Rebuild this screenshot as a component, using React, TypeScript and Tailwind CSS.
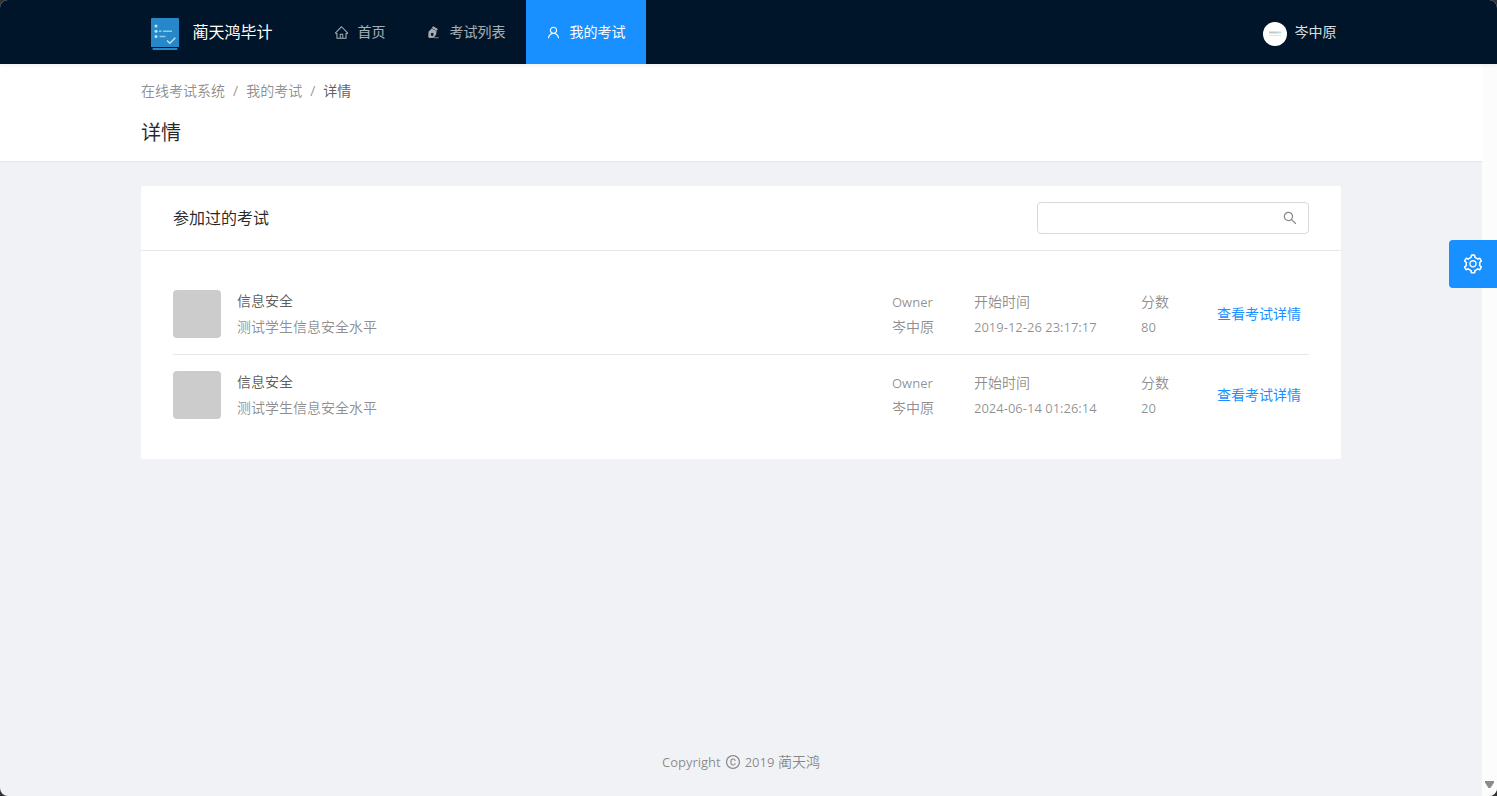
import React, { useState } from "react";
import {
  AiOutlineCopyright,
  AiOutlineHome,
  AiOutlineSearch,
  AiOutlineSetting,
  AiOutlineUser,
} from "react-icons/ai";

interface ExamRecord {
  id: number;
  title: string;
  desc: string;
  owner: string;
  startTime: string;
  score: number;
}

const records: ExamRecord[] = [
  {
    id: 1,
    title: "信息安全",
    desc: "测试学生信息安全水平",
    owner: "岑中原",
    startTime: "2019-12-26 23:17:17",
    score: 80,
  },
  {
    id: 2,
    title: "信息安全",
    desc: "测试学生信息安全水平",
    owner: "岑中原",
    startTime: "2024-06-14 01:26:14",
    score: 20,
  },
];

const Logo = () => (
  <svg className="mt-1" width="32" height="32" viewBox="0 0 32 32" aria-hidden="true">
    <path d="M3 0h26a1 1 0 0 1 1 1v28H2V1a1 1 0 0 1 1-1z" fill="#2688c8" />
    <path d="M3.5 30h25v1a1 1 0 0 1-1 1h-23a1 1 0 0 1-1-1z" fill="#2688c8" />
    <g fill="#b9e4fa">
      <circle cx="7" cy="8" r="1.5" />
      <circle cx="7" cy="13.2" r="1.5" />
      <circle cx="7" cy="18.5" r="1.5" />
    </g>
    <g fill="none" stroke="#8ecbee" strokeWidth="1.4">
      <path d="M10 13.2h2.5M14 13.2h9M10.5 18.5h6" />
      <path d="M18 22.5l2.8 2.8 5.5-5.5" stroke="#b9e4fa" />
    </g>
  </svg>
);

// pen nib over a short line
const ExamIcon = () => (
  <svg width="15" height="15" viewBox="0 0 16 16" aria-hidden="true">
    <path
      fill="currentColor"
      fillRule="evenodd"
      d="M7.6 1.2 12.6 4.2 11.6 6 6.2 3.2zM6 3.6 11.3 6.4 10.8 10 8.2 13.6 3.6 13.9 2.4 12.8 2.7 7.2zM6.6 8.200a1.500 1.700 0 1 0 0 3.400 1.500 1.700 0 0 0 0-3.400z"
    />
    <path d="M8.500 13.600h5" stroke="currentColor" strokeWidth="0.8" />
  </svg>
);

const navItems = [
  { label: "首页", icon: <AiOutlineHome size={15} />, active: false },
  { label: "考试列表", icon: <ExamIcon />, active: false },
  { label: "我的考试", icon: <AiOutlineUser size={15} />, active: true },
];

const Header = () => (
  <header className="relative z-10 h-16 bg-[#001529] shadow-[0_1px_4px_rgba(0,21,41,0.08)]">
    <div className="mx-auto flex h-full max-w-[1200px] items-center justify-between">
      <div className="flex h-full items-center">
        <a href="#" className="flex w-[165px] items-center gap-3 text-base text-white">
          <Logo />
          <h1>蔺天鸿毕计</h1>
        </a>
        <nav className="flex h-full">
          {navItems.map((item) => (
            <a
              key={item.label}
              href="#"
              className={
                item.active
                  ? "flex items-center gap-[9px] bg-[#1890ff] px-5 text-white"
                  : "flex items-center gap-[9px] px-5 text-white/65"
              }
            >
              {item.icon}
              <span>{item.label}</span>
            </a>
          ))}
        </nav>
      </div>
      <button type="button" className="flex h-full items-center gap-2 px-3 text-white/85">
        <svg className="mt-1" width="24" height="24" viewBox="0 0 24 24" aria-hidden="true">
          <circle cx="12" cy="12" r="12" fill="#fff" />
          <path d="M6 10.5h8" stroke="#c5c5cf" strokeWidth="2" />
          <path d="M14 10.5h4" stroke="#b5dfe3" strokeWidth="2" />
          <path d="M6 13.5h12" stroke="#cdeaec" strokeWidth="1" />
        </svg>
        <span>岑中原</span>
      </button>
    </div>
  </header>
);

const PageHeader = () => (
  <div className="border-b border-[#e8e8e8] bg-white pt-4 pb-[13px]">
    <div className="mx-auto max-w-[1200px]">
      <nav className="mb-4 flex gap-2 text-black/45">
        <a href="#">在线考试系统</a>
        <span>/</span>
        <a href="#">我的考试</a>
        <span>/</span>
        <span className="text-black/65">详情</span>
      </nav>
      <h2 className="text-xl leading-[30px] text-black/85">详情</h2>
    </div>
  </div>
);

const ExamRow = ({ record }: { record: ExamRecord }) => (
  <li className="flex items-center border-b border-[#e8e8e8] py-4 last:border-b-0">
    <div className="mr-4 size-12 rounded bg-[#ccc]" />
    <div className="flex flex-1 flex-col gap-1">
      <h4 className="text-black/65">{record.title}</h4>
      <p className="text-black/45">{record.desc}</p>
    </div>
    <dl className="flex gap-10 text-black/45">
      <div className="flex w-[42px] flex-col gap-[3px]">
        <dt className="text-[13px]">Owner</dt>
        <dd>{record.owner}</dd>
      </div>
      <div className="flex w-[127px] flex-col gap-[3px]">
        <dt>开始时间</dt>
        <dd className="text-[13px] whitespace-nowrap">{record.startTime}</dd>
      </div>
      <div className="flex w-7 flex-col gap-[3px]">
        <dt>分数</dt>
        <dd className="text-[13px]">{record.score}</dd>
      </div>
    </dl>
    <a href="#" className="ml-10 px-2 text-[#1890ff]">
      查看考试详情
    </a>
  </li>
);

const App: React.FC = () => {
  const [keyword, setKeyword] = useState("");

  return (
    <div className="bg-[#333]">
      <div className="flex min-h-screen flex-col overflow-hidden rounded-lg bg-[#f0f2f5] font-['Open_Sans','Noto_Sans_CJK_SC',sans-serif] text-sm leading-[22px]">
        <Header />
        <div className="flex flex-1">
          <div className="flex flex-1 flex-col">
            <PageHeader />

            <main className="mx-auto mt-6 w-full max-w-[1200px] flex-1">
              <section className="rounded-xs bg-white">
                <div className="-mb-px flex items-center justify-between border-b border-[#e8e8e8] px-8 py-4">
                  <h3 className="text-base leading-8 text-black/85">参加过的考试</h3>
                  <div className="flex h-8 w-[272px] items-center rounded border border-[#d9d9d9] bg-white px-2.5">
                    <input
                      type="text"
                      aria-label="搜索考试"
                      className="min-w-0 flex-1 outline-none"
                      value={keyword}
                      onChange={(e) => setKeyword(e.target.value)}
                    />
                    <button type="button" aria-label="搜索" className="text-black/45">
                      <AiOutlineSearch size={16} />
                    </button>
                  </div>
                </div>
                <ul className="px-8 py-6">
                  {records
                    .filter((record) => record.title.includes(keyword))
                    .map((record) => (
                      <ExamRow key={record.id} record={record} />
                    ))}
                </ul>
              </section>
            </main>

            <footer className="flex items-center justify-center gap-1 pb-[23px] text-black/45">
              <span className="text-[13px]">Copyright</span>
              <AiOutlineCopyright size={16} />
              <span>
                <span className="text-[13px]">2019</span> 蔺天鸿
              </span>
            </footer>
          </div>

          {/* scroll track */}
          <div className="flex w-[15px] flex-col items-center justify-end bg-[#fcfcfc] pb-2">
            <svg width="9" height="7" viewBox="0 0 9 7" aria-hidden="true">
              <path d="M0 0h9v1.5L5.5 7h-2L0 1.5z" fill="#8b8b8b" />
            </svg>
          </div>
        </div>

        <button
          type="button"
          aria-label="设置"
          className="fixed top-60 right-0 z-20 flex size-12 items-center justify-center rounded-l bg-[#1890ff] text-white"
        >
          <AiOutlineSetting size={22} />
        </button>
      </div>
    </div>
  );
};

export default App;
